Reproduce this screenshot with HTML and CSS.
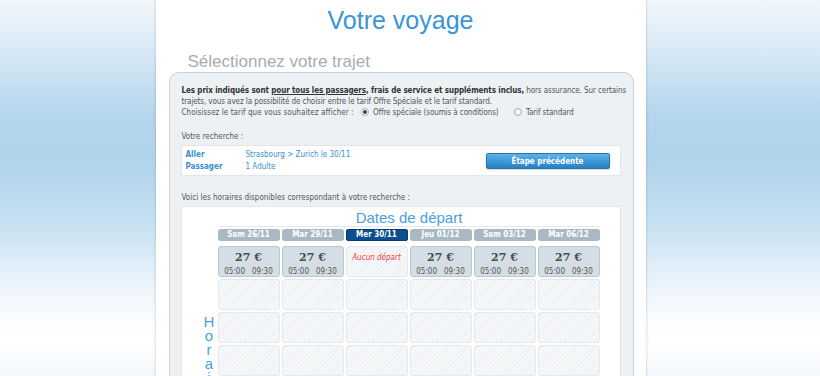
FILE: index.html
```html
<!DOCTYPE html>
<html lang="fr">

<head>
    <meta charset="UTF-8">
    <meta name="viewport" content="width=device-width, initial-scale=1.0">
    <title>Votre voyage</title>
    <link rel="stylesheet" href="styles.css">
</head>

<body>
    <div class="page">
        <h1>Votre voyage</h1>
        <h2>Sélectionnez votre trajet</h2>

        <div class="panel">
            <p class="note">
                <b>Les prix indiqués sont <u>pour tous les passagers</u>, frais de service et suppléments inclus,</b>
                hors assurance. Sur certains trajets, vous avez la possibilité de choisir entre le tarif Offre Spéciale et le tarif standard.<br>
                <span class="choice">Choisissez le tarif que vous souhaitez afficher :</span>
                <label class="radio"><input type="radio" name="tarif" checked> Offre spéciale (soumis à conditions)</label>
                <label class="radio"><input type="radio" name="tarif"> Tarif standard</label>
            </p>

            <p class="caption">Votre recherche :</p>
            <div class="search">
                <dl>
                    <dt>Aller</dt>
                    <dd>Strasbourg &gt; Zurich le 30/11</dd>
                    <dt>Passager</dt>
                    <dd>1 Adulte</dd>
                </dl>
                <button class="back">Étape précédente</button>
            </div>

            <p class="caption list">Voici les horaires disponibles correspondant à votre recherche :</p>
            <div class="schedule">
                <h3>Dates de départ</h3>
                <div class="grid">
                    <div class="side"></div>
                    <div class="day">Sam 26/11</div>
                    <div class="day">Mar 29/11</div>
                    <div class="day current">Mer 30/11</div>
                    <div class="day">Jeu 01/12</div>
                    <div class="day">Sam 03/12</div>
                    <div class="day">Mar 06/12</div>

                    <div class="side"></div>
                    <div class="price"><strong>27 €</strong><span>05:00</span><span>09:30</span></div>
                    <div class="price"><strong>27 €</strong><span>05:00</span><span>09:30</span></div>
                    <div class="none">Aucun départ</div>
                    <div class="price"><strong>27 €</strong><span>05:00</span><span>09:30</span></div>
                    <div class="price"><strong>27 €</strong><span>05:00</span><span>09:30</span></div>
                    <div class="price"><strong>27 €</strong><span>05:00</span><span>09:30</span></div>

                    <div class="side hours"><span>Horaires</span></div>
                    <div class="slot"></div><div class="slot"></div><div class="slot"></div>
                    <div class="slot"></div><div class="slot"></div><div class="slot"></div>
                    <div class="slot"></div><div class="slot"></div><div class="slot"></div>
                    <div class="slot"></div><div class="slot"></div><div class="slot"></div>
                    <div class="slot"></div><div class="slot"></div><div class="slot"></div>
                    <div class="slot"></div><div class="slot"></div><div class="slot"></div>
                    <div class="slot"></div><div class="slot"></div><div class="slot"></div>
                    <div class="slot"></div><div class="slot"></div><div class="slot"></div>
                </div>
            </div>
        </div>
    </div>
</body>
</html>
```

FILE: styles.css
```css
html {
    background: #fff;
}

body {
    margin: 0;
    padding-right: 19px;
    min-height: 376px;
    font-family: 'DejaVu Sans Condensed', 'Liberation Sans', sans-serif;
    font-size: 8px;
    color: #555;
    background: linear-gradient(to bottom, #f2f7fb 0, #dcebf6 45px, #b4d6ee 115px, #b0d4ec 160px, #c4e0f2 220px, #e6f1f9 275px, #fcfdfe 320px, #fff 345px, #f4f8fb 376px) no-repeat;
    background-size: 100% 376px;
}

.page {
    width: 490px;
    margin: 0 auto;
    min-height: 400px;
    background: #fff;
    box-shadow: 0 0 3px rgba(80, 100, 120, 0.35);
    padding-top: 6px;
}

h1 {
    margin: 0;
    text-align: center;
    font-family: 'Liberation Sans', sans-serif;
    font-weight: normal;
    font-size: 25px;
    line-height: 28px;
    color: #3a94d8;
}

h2 {
    margin: 18px 0 0 32px;
    font-family: 'Liberation Sans', sans-serif;
    font-weight: normal;
    font-size: 17px;
    line-height: 20px;
    color: #a4aeb4;
}

.panel {
    margin: 0 12px 0 13px;
    padding: 12px 12px 0 11px;
    background: #edf1f4;
    border: 1px solid #cbd3d9;
    border-radius: 10px;
    min-height: 320px;
}

.note {
    margin: 0 -7px 0 1px;
    line-height: 11px;
    letter-spacing: -0.1px;
}

.note b {
    color: #333;
}

.choice {
    letter-spacing: 0.05px;
}

.radio {
    margin-left: 5px;
}

.radio + .radio {
    margin-left: 13px;
}

.radio input {
    appearance: none;
    width: 8px;
    height: 8px;
    margin: 0 2px 0 0;
    vertical-align: -1px;
    border: 1px solid #a7adb2;
    border-radius: 50%;
    background: radial-gradient(circle, #fff 0, #e3e6e9 100%);
}

.radio input:checked {
    background: radial-gradient(circle, #4a4a4a 0, #4a4a4a 1.6px, #fff 2.2px, #e3e6e9 100%);
}

.caption {
    margin: 13px 0 3px 1px;
    line-height: 11px;
}

.caption.list {
    margin: 16px 0 3px 1px;
}

.search {
    display: flex;
    align-items: center;
    justify-content: space-between;
    background: #fff;
    border: 1px solid #e0e6ea;
    padding: 3px 10px 2px 4px;
}

.search dl {
    margin: 0;
    display: grid;
    grid-template-columns: 60px auto;
    line-height: 12px;
    color: #3a8fd0;
}

.search dt {
    font-weight: bold;
}

.search dd {
    margin: 0;
}

.back {
    width: 124px;
    height: 16px;
    padding: 0;
    border: 1px solid #2a72aa;
    border-radius: 2px;
    background: linear-gradient(to bottom, #5cb3ea, #2580c4);
    color: #fff;
    font-family: inherit;
    font-size: 8px;
    font-weight: bold;
    box-shadow: 0 1px 2px rgba(0, 0, 0, 0.2);
}

.schedule {
    background: #fff;
    border: 1px solid #e0e6ea;
    padding: 2px 20px 20px 0;
}

h3 {
    margin: 0 0 0 37px;
    width: 381px;
    border-bottom: 1px solid #e3e8ec;
    text-align: center;
    font-family: 'Liberation Sans', sans-serif;
    font-weight: normal;
    font-size: 15px;
    line-height: 17px;
    color: #4aa0dd;
}

.grid {
    display: grid;
    grid-template-columns: 34px repeat(6, 62px);
    grid-template-rows: 12px 34px repeat(8, 31px);
    gap: 2px;
    margin-top: 2px;
}

.day {
    background: #a9b9c4;
    border-radius: 3px;
    color: #fff;
    font-weight: bold;
    text-align: center;
    line-height: 12px;
}

.day.current {
    background: #0c4e8e;
    box-shadow: inset 0 0 0 1px #083d70;
}

.price {
    margin-top: 3px;
    background: #d4dee5;
    border: 1px solid #b9c6cf;
    border-radius: 3px;
    display: flex;
    flex-wrap: wrap;
    align-content: flex-start;
    justify-content: center;
    column-gap: 7px;
}

.price strong {
    width: 100%;
    text-align: center;
    font-family: 'DejaVu Serif', serif;
    font-size: 11px;
    line-height: 15px;
    margin-top: 3px;
    color: #4a4a4a;
}

.price span {
    line-height: 12px;
    margin-top: 1px;
}

.none,
.slot {
    border: 1px solid #e4e9ed;
    border-radius: 3px;
    background: repeating-linear-gradient(135deg, #f7f8fa 0, #f7f8fa 2px, #eceff2 2px, #eceff2 3px);
}

.none {
    margin-top: 3px;
    padding-top: 4px;
    text-align: center;
    color: #f03b3b;
    font-style: italic;
    line-height: 14px;
}

.hours {
    grid-row: span 8;
    display: flex;
    justify-content: flex-end;
    margin-right: -2px;
}

.hours span {
    writing-mode: vertical-lr;
    text-orientation: upright;
    font-family: 'Liberation Sans', sans-serif;
    font-size: 15px;
    letter-spacing: -3px;
    color: #4aa0dd;
    margin-top: 34px;
}
```
